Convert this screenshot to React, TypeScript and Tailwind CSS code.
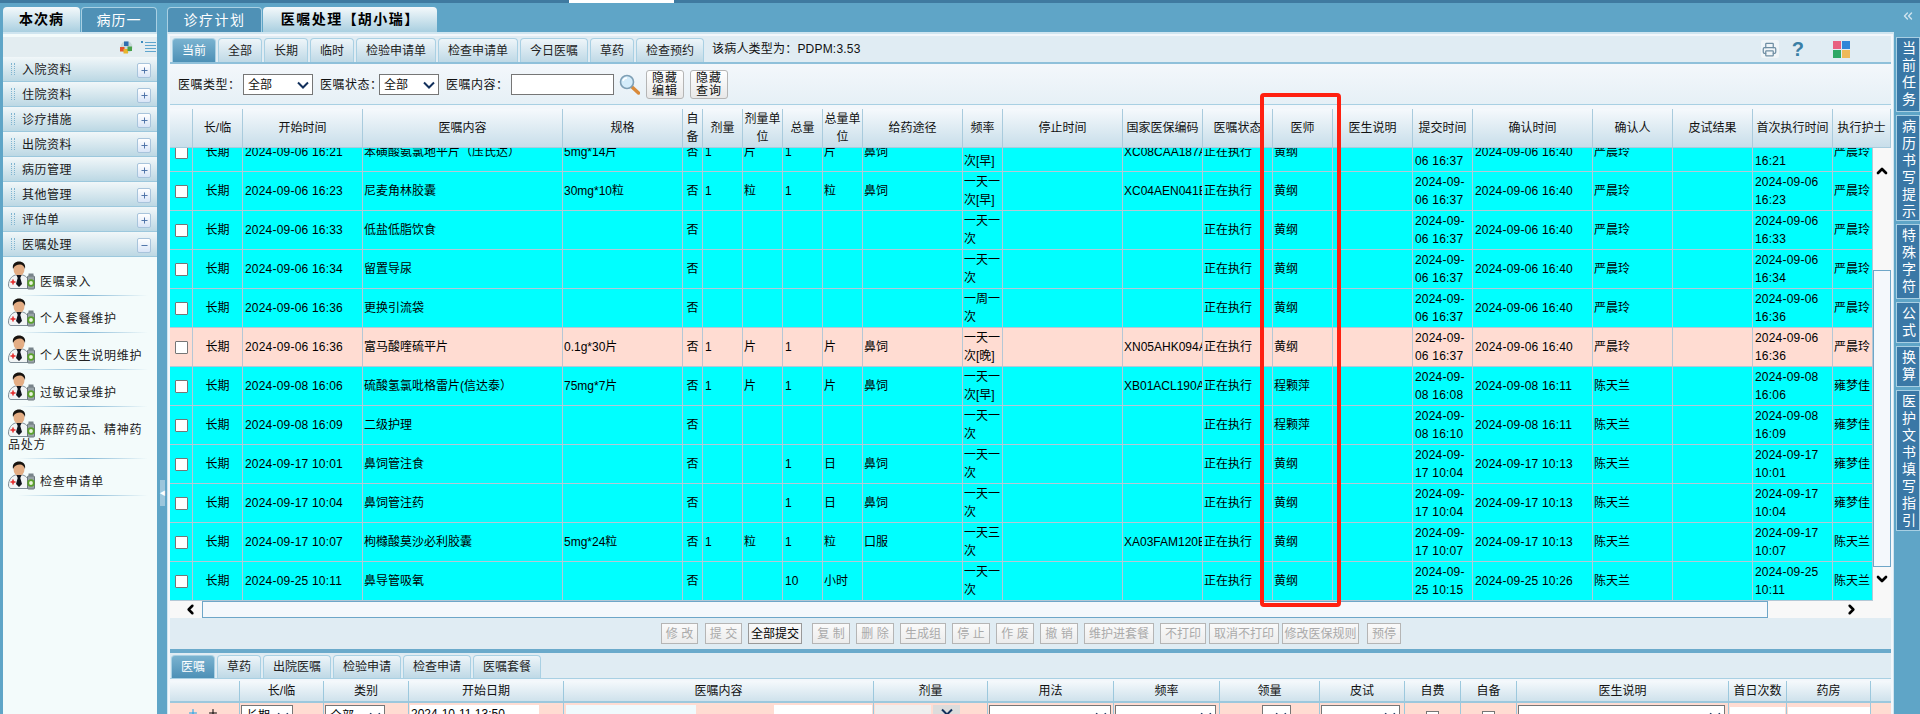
import { ChevronDown, ChevronLeft, ChevronRight, ChevronUp, ChevronsLeft, Minus, Plus, Printer } from "lucide-react";

const FONT = "font-['Liberation_Sans','Noto_Sans_CJK_SC',sans-serif]";
const GRID = "grid grid-cols-[23px_50px_120px_200px_120px_20px_40px_40px_40px_40px_100px_40px_120px_80px_70px_60px_80px_60px_120px_80px_80px_80px_40px]";
const HEAD_GRID = "grid grid-cols-[23px_50px_120px_200px_120px_20px_40px_40px_40px_40px_100px_40px_120px_80px_70px_60px_80px_60px_120px_80px_80px_80px_58px]";
const BOTTOM_GRID = "grid grid-cols-[70px_84px_85px_155px_310px_114px_126px_106px_100px_85px_56px_56px_212px_58px_84px]";

const DoctorIcon = () => (
	<svg width="27" height="29" viewBox="0 0 27 29" className="mr-[5px] inline align-bottom">
		<path d="M0.500 24c0-5 3-9 7-10h7c4 1 6.500 4 6.500 9v4.500H3c-1.500 0-2.500-1.500-2.500-3.500z" fill="#f1f4f5" stroke="#7f8e98" />
		<ellipse cx="11" cy="8" rx="5.500" ry="7" fill="#e3ad84" />
		<path d="M5 8C4 2.500 7.500 0.500 11 0.500s7 2 6 7.500c-1-3-2.500-4.500-5-4.500C9 3.500 6.500 4.500 5 8z" fill="#17130f" />
		<path d="M8.500 14h5l-1.200 3 1.700 6-3 3-3-3 1.700-6z" fill="#10141c" />
		<path d="M2.500 21h5M5 18.500v5" stroke="#e32626" strokeWidth="1.500" />
		<rect x="19.500" y="15" width="7" height="13" rx="1" fill="#98a3a8" stroke="#6a767b" />
		<circle cx="23" cy="22" r="2.800" fill="#eaf3dc" stroke="#5aa02c" strokeWidth="1.800" />
		<rect x="20.500" y="12.500" width="5" height="2.500" fill="#78848a" />
	</svg>
);

const SelectArrow = () => (
	<svg width="12" height="8" viewBox="0 0 12 8" className="shrink-0">
		<path d="M1 1.500 6 6.500l5-5" fill="none" stroke="#12305c" strokeWidth="2" />
	</svg>
);

const SelectBox = ({ label, className }: { label: string; className: string }) => (
	<div className={`flex items-center justify-between border-[1px] border-[#767676] bg-white pl-[4px] pr-[3px] ${className}`}>
		<span>{label}</span>
		<SelectArrow />
	</div>
);

const Magnifier = () => (
	<svg width="21" height="21" viewBox="0 0 21 21">
		<path d="m13 13 6.500 6" stroke="#d98a3a" strokeWidth="3.500" strokeLinecap="round" />
		<circle cx="8" cy="8" r="6.500" fill="#d4ecfa" stroke="#7e9fb5" strokeWidth="1.600" />
		<path d="M4 7c.5-2 2-3 4-3" stroke="#fff" strokeWidth="1.500" fill="none" />
	</svg>
);

const ColorCubes = () => (
	<svg width="15" height="15" viewBox="0 0 15 15">
		<circle cx="8.500" cy="7" r="6" fill="#c6d8d8" />
		<rect x="6" y="1.500" width="4.500" height="4.500" fill="#2f6fb0" />
		<rect x="2" y="7" width="4.500" height="4.500" fill="#e5522a" />
		<rect x="5.500" y="9" width="4.500" height="4.500" fill="#e8b52c" />
		<rect x="9.500" y="6.500" width="4.500" height="4.500" fill="#48a24a" />
	</svg>
);

const ListIcon = () => (
	<svg width="15" height="13" viewBox="0 0 15 13">
		<rect x="0" y="0" width="2" height="2" fill="#3b8cc0" />
		<path d="M4 1.500h11M4 4.500h11M4 7.500h11M4 10.500h11" stroke="#5fa5cd" strokeWidth="1.200" />
	</svg>
);

const leftTop = ["入院资料", "住院资料", "诊疗措施", "出院资料", "病历管理", "其他管理", "评估单", "医嘱处理"];
const leftItems = ["医嘱录入", "个人套餐维护", "个人医生说明维护", "过敏记录维护", "麻醉药品、精神药品处方", "检查申请单"];

const subTabs = [
	{ t: "当前", w: "w-[44px]" },
	{ t: "全部", w: "w-[44px]" },
	{ t: "长期", w: "w-[44px]" },
	{ t: "临时", w: "w-[44px]" },
	{ t: "检验申请单", w: "w-[80px]" },
	{ t: "检查申请单", w: "w-[80px]" },
	{ t: "今日医嘱", w: "w-[68px]" },
	{ t: "草药", w: "w-[44px]" },
	{ t: "检查预约", w: "w-[68px]" },
];

const bottomTabs = [
	{ t: "医嘱", w: "w-[44px]" },
	{ t: "草药", w: "w-[44px]" },
	{ t: "出院医嘱", w: "w-[68px]" },
	{ t: "检验申请", w: "w-[68px]" },
	{ t: "检查申请", w: "w-[68px]" },
	{ t: "医嘱套餐", w: "w-[68px]" },
];

const headers = ["", "长/临", "开始时间", "医嘱内容", "规格", "自备", "剂量", "剂量单位", "总量", "总量单位", "给药途径", "频率", "停止时间", "国家医保编码", "医嘱状态", "医师", "医生说明", "提交时间", "确认时间", "确认人", "皮试结果", "首次执行时间", "执行护士"];

const bottomHeaders = ["", "长/临", "类别", "开始日期", "医嘱内容", "剂量", "用法", "频率", "领量", "皮试", "自费", "自备", "医生说明", "首日次数", "药房"];

// start, content, spec, dose, unit, total, totalUnit, route, freq, code, doctor, submit, confirm, confirmer, first, nurse
const rows = [
	["2024-09-06 16:21", "苯磺酸氨氯地平片（压氏达）", "5mg*14片", "1", "片", "1", "片", "鼻饲", "一天一次[早]", "XC08CAA187A", "黄纲", "2024-09-06 16:37", "2024-09-06 16:40", "严晨玲", "2024-09-06 16:21", "严晨玲"],
	["2024-09-06 16:23", "尼麦角林胶囊", "30mg*10粒", "1", "粒", "1", "粒", "鼻饲", "一天一次[早]", "XC04AEN041E", "黄纲", "2024-09-06 16:37", "2024-09-06 16:40", "严晨玲", "2024-09-06 16:23", "严晨玲"],
	["2024-09-06 16:33", "低盐低脂饮食", "", "", "", "", "", "", "一天一次", "", "黄纲", "2024-09-06 16:37", "2024-09-06 16:40", "严晨玲", "2024-09-06 16:33", "严晨玲"],
	["2024-09-06 16:34", "留置导尿", "", "", "", "", "", "", "一天一次", "", "黄纲", "2024-09-06 16:37", "2024-09-06 16:40", "严晨玲", "2024-09-06 16:34", "严晨玲"],
	["2024-09-06 16:36", "更换引流袋", "", "", "", "", "", "", "一周一次", "", "黄纲", "2024-09-06 16:37", "2024-09-06 16:40", "严晨玲", "2024-09-06 16:36", "严晨玲"],
	["2024-09-06 16:36", "富马酸喹硫平片", "0.1g*30片", "1", "片", "1", "片", "鼻饲", "一天一次[晚]", "XN05AHK094A", "黄纲", "2024-09-06 16:37", "2024-09-06 16:40", "严晨玲", "2024-09-06 16:36", "严晨玲"],
	["2024-09-08 16:06", "硫酸氢氯吡格雷片(信达泰）", "75mg*7片", "1", "片", "1", "片", "鼻饲", "一天一次[早]", "XB01ACL190A", "程颗萍", "2024-09-08 16:08", "2024-09-08 16:11", "陈天兰", "2024-09-08 16:06", "雍梦佳"],
	["2024-09-08 16:09", "二级护理", "", "", "", "", "", "", "一天一次", "", "程颗萍", "2024-09-08 16:10", "2024-09-08 16:11", "陈天兰", "2024-09-08 16:09", "雍梦佳"],
	["2024-09-17 10:01", "鼻饲管注食", "", "", "", "1", "日", "鼻饲", "一天一次", "", "黄纲", "2024-09-17 10:04", "2024-09-17 10:13", "陈天兰", "2024-09-17 10:01", "雍梦佳"],
	["2024-09-17 10:04", "鼻饲管注药", "", "", "", "1", "日", "鼻饲", "一天一次", "", "黄纲", "2024-09-17 10:04", "2024-09-17 10:13", "陈天兰", "2024-09-17 10:04", "雍梦佳"],
	["2024-09-17 10:07", "枸橼酸莫沙必利胶囊", "5mg*24粒", "1", "粒", "1", "粒", "口服", "一天三次", "XA03FAM120E", "黄纲", "2024-09-17 10:07", "2024-09-17 10:13", "陈天兰", "2024-09-17 10:07", "陈天兰"],
	["2024-09-25 10:11", "鼻导管吸氧", "", "", "", "10", "小时", "", "一天一次", "", "黄纲", "2024-09-25 10:15", "2024-09-25 10:26", "陈天兰", "2024-09-25 10:11", "陈天兰"],
];

const actionButtons = [
	{ t: "修 改", c: "w-[37px]" },
	{ t: "提 交", c: "w-[37px] ml-[7px]" },
	{ t: "全部提交", c: "w-[54px] ml-[6px]", on: true },
	{ t: "复 制", c: "w-[38px] ml-[10px]" },
	{ t: "删 除", c: "w-[38px] ml-[6px]" },
	{ t: "生成组", c: "w-[46px] ml-[6px]" },
	{ t: "停 止", c: "w-[38px] ml-[6px]" },
	{ t: "作 废", c: "w-[38px] ml-[6px]" },
	{ t: "撤 销", c: "w-[38px] ml-[6px]" },
	{ t: "维护进套餐", c: "w-[70px] ml-[6px]" },
	{ t: "不打印", c: "w-[46px] ml-[6px]" },
	{ t: "取消不打印", c: "w-[70px] ml-[3px]" },
	{ t: "修改医保规则", c: "w-[77px] ml-[3px]" },
	{ t: "预停", c: "w-[34px] ml-[8px]" },
];

const railItems = [
	{ t: "当前任务", h: "h-[75px]" },
	{ t: "病历书写提示", h: "h-[106px]" },
	{ t: "特殊字符", h: "h-[75px]" },
	{ t: "公式", h: "h-[41px]" },
	{ t: "换算", h: "h-[41px]" },
	{ t: "医护文书填写指引", h: "h-[141px]" },
];

const Tab = ({ t, w, active }: { t: string; w: string; active?: boolean }) => (
	<div
		className={`flex items-center justify-center rounded-t-[4px] border-[1px] border-b-0 border-[#a9d0e3] ${w} ${
			active ? "bg-gradient-to-b from-[#7ab3d0] to-[#4d90b6] text-white" : "bg-gradient-to-b from-[#eef5f9] to-[#bfd9e6] text-[#222]"
		}`}
	>
		{t}
	</div>
);

const Cell = ({ children, className = "" }: { children?: React.ReactNode; className?: string }) => (
	<div className={`flex items-center overflow-hidden border-r-[1px] border-[#b4c8d6] ${className}`}>{children}</div>
);

const DataRow = ({ row, pink }: { row: string[]; pink?: boolean }) => {
	const [start, content, spec, dose, unit, total, totalUnit, route, freq, code, doctor, submit, confirm, confirmer, first, nurse] = row;
	return (
		<div className={`${GRID} h-[39px] border-b-[1px] border-[#b4c8d6] leading-[18px] ${pink ? "bg-[#ffdcd2]" : "bg-[#00ffff]"}`}>
			<Cell className="justify-center">
				<div className="h-[13px] w-[13px] rounded-[1px] border-[1px] border-[#767676] bg-white" />
			</Cell>
			<Cell className="justify-center">长期</Cell>
			<Cell className="pl-[2px] tracking-[0.2px]">{start}</Cell>
			<Cell className="pl-[1px]">{content}</Cell>
			<Cell className="pl-[1px]">{spec}</Cell>
			<Cell className="justify-center">否</Cell>
			<Cell className="pl-[2px]">{dose}</Cell>
			<Cell className="pl-[1px]">{unit}</Cell>
			<Cell className="pl-[2px]">{total}</Cell>
			<Cell className="pl-[1px]">{totalUnit}</Cell>
			<Cell className="pl-[1px]">{route}</Cell>
			<Cell className="pl-[1px]">{freq}</Cell>
			<Cell />
			<Cell className="whitespace-nowrap pl-[1px]">{code}</Cell>
			<Cell className="pl-[1px]">正在执行</Cell>
			<Cell className="pl-[1px]">{doctor}</Cell>
			<Cell />
			<Cell className="pl-[2px] tracking-[0.2px]">{submit}</Cell>
			<Cell className="pl-[2px] tracking-[0.2px]">{confirm}</Cell>
			<Cell className="pl-[1px]">{confirmer}</Cell>
			<Cell />
			<Cell className="pl-[2px] tracking-[0.2px]">{first}</Cell>
			<Cell className="pl-[1px]">{nurse}</Cell>
		</div>
	);
};

const LeftPanel = () => (
	<div className="ml-[3px] w-[154px] pt-[4px]">
		<div className="flex h-[25px] text-[14px] tracking-[1px]">
			<div className="flex w-[77px] items-center justify-center rounded-t-[4px] bg-gradient-to-b from-[#f4f9fb] to-[#a9cfe0] font-bold text-black">本次病</div>
			<div className="ml-[1px] flex w-[76px] items-center justify-center rounded-t-[4px] border-[1px] border-b-0 border-[#a9d0e3] bg-[#4f91b6] text-white">病历一</div>
		</div>
		<div className="h-[682px] border-t-[2px] border-[#cfe5f0] bg-[#f3fbfb]">
			<div className="h-[3px]" />
			<div className="flex h-[20px] items-center justify-end gap-[8px] bg-[#e3edf1] pr-[1px]">
				<ColorCubes />
				<ListIcon />
			</div>
			{leftTop.map((t, i) => (
				<div key={t} className="flex h-[25px] items-center border-b-[1px] border-[#9cc8dd] bg-gradient-to-b from-[#f1f7f9] to-[#bcd8e4] pr-[6px] pl-[8px] tracking-[0.5px] text-[#1a1a1a]">
					<div className="h-[12px] w-[4px] border-x-[1px] border-dotted border-[#7fb4d0]" />
					<span className="ml-[7px] flex-1 pt-[2px]">{t}</span>
					<div className="mt-[2px] flex h-[15px] w-[14px] items-center justify-center rounded-[2px] border-[1px] border-[#a8c4dc] bg-gradient-to-b from-white to-[#d9e5f7] text-[#4a6fa5]">
						{i === 7 ? <Minus size={9} strokeWidth={2.5} /> : <Plus size={9} strokeWidth={2.5} />}
					</div>
				</div>
			))}
			<div className="h-[2px]" />
			{leftItems.map((t) => (
				<div key={t} className="pt-[2px] pr-[8px] pl-[5px] leading-[15px] tracking-[0.8px] text-[#222]">
					<DoctorIcon />
					{t}
					<div className="mt-[5px] ml-[10px] h-[1px] w-[130px] bg-gradient-to-r from-transparent via-[#7fb4d4] to-transparent" />
				</div>
			))}
		</div>
	</div>
);

const MainPanel = () => (
	<div className="ml-[10px] mt-[1px] flex w-[1727px] flex-col">
		<div className="flex h-[28px] gap-[1px] pt-[3px] text-[14px] tracking-[1.5px]">
			<div className="flex w-[95px] items-center justify-center rounded-t-[4px] border-[1px] border-b-0 border-[#a9d0e3] bg-[#4f91b6] text-white">诊疗计划</div>
			<div className="flex w-[174px] items-center justify-center rounded-t-[4px] bg-gradient-to-b from-[#f4f9fb] to-[#a9cfe0] font-bold text-black">
				<span>
					医嘱处理<span className="inline-block w-[15px] text-center">【</span>胡小瑞<span className="inline-block w-[15px] text-center">】</span>
				</span>
			</div>
		</div>
		<div className="h-[682px] border-x-[1px] border-t-[2px] border-[#cfe5f0] bg-[#f3f7fb] px-[2px] pt-[2px]">
			<div className="flex h-[28px] items-end gap-[2px] border-b-[2px] border-[#8fc0da] bg-[#e0ecf3] pl-[2px]">
				{subTabs.map((s, i) => (
					<Tab key={s.t} t={s.t} w={`${s.w} h-[24px]`} active={i === 0} />
				))}
				<div className="flex h-[26px] flex-1 items-center pl-[6px] text-[#111]">
					<span className="tracking-[0.2px]">该病人类型为：PDPM:3.53</span>
					<div className="ml-auto flex items-center">
						<div className="flex h-[18px] w-[18px] items-center justify-center rounded-[2px] bg-[#f0f5f8] text-[#6f8ea3]">
							<Printer size={15} />
						</div>
						<span className="ml-[13px] text-[20px] font-bold leading-none text-[#3a7fa5]">?</span>
						<div className="ml-[29px] mr-[41px] grid grid-cols-2 gap-[1px]">
							<div className="h-[8px] w-[8px] bg-[#e8607f]" />
							<div className="h-[8px] w-[8px] bg-[#2e86d8]" />
							<div className="h-[8px] w-[8px] bg-[#2fa866]" />
							<div className="h-[8px] w-[8px] bg-[#eeb958]" />
						</div>
					</div>
				</div>
			</div>
			<div className="mt-[1px] flex h-[40px] items-center border-b-[1px] border-[#a9d0e3] bg-gradient-to-b from-[#f3f7fb] to-[#e6f0f6] pl-[8px] text-[#111]">
				<span className="w-[65px] tracking-[0.5px]">医嘱类型：</span>
				<SelectBox label="全部" className="h-[21px] w-[70px]" />
				<span className="ml-[7px] w-[59px] tracking-[0.5px] whitespace-nowrap">医嘱状态：</span>
				<SelectBox label="全部" className="h-[21px] w-[60px]" />
				<span className="ml-[7px] w-[65px] tracking-[0.5px] whitespace-nowrap">医嘱内容：</span>
				<div className="h-[21px] w-[103px] border-[1px] border-[#767676] bg-white" />
				<div className="ml-[5px] mr-[6px] flex">
					<Magnifier />
				</div>
				<div className="h-[29px] w-[38px] rounded-[3px] border-[1px] border-[#b5b5b5] bg-gradient-to-b from-white to-[#e8e8e8] pt-[1px] text-center leading-[13px] tracking-[1px]">隐藏<br />编辑</div>
				<div className="ml-[6px] h-[29px] w-[38px] rounded-[3px] border-[1px] border-[#b5b5b5] bg-gradient-to-b from-white to-[#e8e8e8] pt-[1px] text-center leading-[13px] tracking-[1px]">隐藏<br />查询</div>
			</div>
			<div className="h-[4px] bg-[#f3f7fb]" />
			<div className={`${HEAD_GRID} h-[39px] border-b-[1px] border-[#a9cbdd] bg-gradient-to-b from-[#f5f9fc] to-[#c8deea] leading-[18px] text-[#111]`}>
				{headers.map((h, i) => (
					<div key={i} className="flex items-center justify-center border-r-[1px] border-[#a9cbdd] text-center">{h}</div>
				))}
			</div>
			<div className="flex h-[453px]">
				<div className="h-full w-[1703px] overflow-hidden text-black">
					<div className="-mt-[15px]">
						{rows.map((r, i) => (
							<DataRow key={i} row={r} pink={i === 5} />
						))}
					</div>
				</div>
				<div className="flex h-full w-[18px] flex-col items-center bg-[#f8f8f8]">
					<ChevronUp size={16} strokeWidth={4} className="mt-[15px]" />
					<div className="mt-[91px] h-[297px] w-[18px] border-[1px] border-[#6ea6c8] bg-[#f4f8fc]" />
					<ChevronDown size={16} strokeWidth={4} className="mt-[4px]" />
				</div>
			</div>
			<div className="flex h-[17px] items-center bg-[#f8f8f8]">
				<div className="flex w-[32px] justify-center pl-[8px]">
					<ChevronLeft size={15} strokeWidth={4} />
				</div>
				<div className="h-[17px] w-[1566px] border-[1px] border-[#6ea6c8] bg-[#f4f8fc]" />
				<div className="flex flex-1 justify-center pl-[44px]">
					<ChevronRight size={15} strokeWidth={4} />
				</div>
			</div>
			<div className="flex h-[31px] items-center bg-[#e0ecf3] pl-[491px]">
				{actionButtons.map((b) => (
					<div
						key={b.t}
						className={`flex h-[21px] items-center justify-center whitespace-pre border-[1px] bg-gradient-to-b from-[#fafafa] to-[#ececec] ${b.c} ${
							b.on ? "border-[#999] text-black" : "border-[#b5b5b5] text-[#aaa]"
						}`}
					>
						{b.t}
					</div>
				))}
			</div>
			<div className="h-[4px] bg-[#6baacb]" />
			<div className="flex h-[26px] items-end gap-[2px] border-b-[1px] border-[#a9d0e3] bg-[#e0ecf3] pl-[1px]">
				{bottomTabs.map((s, i) => (
					<Tab key={s.t} t={s.t} w={`${s.w} h-[23px]`} active={i === 0} />
				))}
			</div>
			<div className="h-[2px]" />
			<div className={`${BOTTOM_GRID} h-[22px] border-b-[2px] border-[#9cc8dd] bg-gradient-to-b from-[#f5f9fc] to-[#cfe2ec] text-[#111]`}>
				{bottomHeaders.map((h, i) => (
					<div key={i} className="flex items-center justify-center border-r-[1px] border-[#9cc8dd]">{h}</div>
				))}
			</div>
			<div className={`${BOTTOM_GRID} h-[14px] overflow-hidden bg-[#ffdcd2]`}>
				<div className="flex items-start justify-end gap-[8px] border-r-[1px] border-[#9cc8dd] pt-[4px] pr-[20px]">
					<Plus size={12} strokeWidth={2} className="text-[#18a0e8]" />
					<Plus size={12} strokeWidth={2} className="text-black" />
				</div>
				<div className="border-r-[1px] border-[#9cc8dd] pt-[2px] pl-[1px]">
					<SelectBox label="长期" className="h-[21px] w-[52px]" />
				</div>
				<div className="border-r-[1px] border-[#9cc8dd] pt-[2px] pl-[1px]">
					<SelectBox label="全部" className="h-[21px] w-[60px]" />
				</div>
				<div className="border-r-[1px] border-[#9cc8dd] pt-[2px] pl-[1px]">
					<div className="h-[21px] w-[129px] bg-white pl-[1px]">2024-10-11 13:50</div>
				</div>
				<div className="flex gap-[78px] border-r-[1px] border-[#9cc8dd] pt-[2px] pl-[2px]">
					<div className="h-[21px] w-[130px] bg-[#f0fafd]" />
					<div className="h-[21px] w-[98px] bg-white" />
				</div>
				<div className="flex border-r-[1px] border-[#9cc8dd] pt-[2px] pl-[1px]">
					<div className="h-[21px] w-[56px] bg-[#efefef]" />
					<div className="ml-[2px] flex h-[21px] w-[27px] justify-center bg-[#dcdcdc] pt-[3px]"><SelectArrow /></div>
				</div>
				<div className="border-r-[1px] border-[#9cc8dd] pt-[2px] pl-[1px]">
					<SelectBox label="" className="h-[21px] w-[122px]" />
				</div>
				<div className="border-r-[1px] border-[#9cc8dd] pt-[2px] pl-[1px]">
					<SelectBox label="" className="h-[21px] w-[101px]" />
				</div>
				<div className="flex justify-end border-r-[1px] border-[#9cc8dd] pt-[2px] pr-[28px]">
					<SelectBox label="" className="h-[21px] w-[29px]" />
				</div>
				<div className="border-r-[1px] border-[#9cc8dd] pt-[2px] pl-[1px]">
					<SelectBox label="" className="h-[21px] w-[79px]" />
				</div>
				<div className="flex justify-center border-r-[1px] border-[#9cc8dd] pt-[8px]">
					<div className="h-[13px] w-[13px] border-[1px] border-[#767676] bg-white" />
				</div>
				<div className="flex justify-center border-r-[1px] border-[#9cc8dd] pt-[8px]">
					<div className="h-[13px] w-[13px] border-[1px] border-[#767676] bg-white" />
				</div>
				<div className="border-r-[1px] border-[#9cc8dd] pt-[2px] pl-[1px]">
					<SelectBox label="" className="h-[21px] w-[207px]" />
				</div>
				<div className="border-r-[1px] border-[#9cc8dd] pt-[4px] pl-[1px]">
					<div className="h-[21px] w-[55px] bg-white" />
				</div>
				<div className="border-r-[1px] border-[#9cc8dd] pt-[4px] pl-[1px]">
					<div className="h-[21px] w-[82px] bg-white" />
				</div>
			</div>
		</div>
	</div>
);

const RightRail = () => (
	<div className="ml-[2px] flex w-[25px] flex-col gap-[3px]">
		<div className="flex h-[31px] items-start justify-center pt-[6px] text-[#cfe3ee]">
			<ChevronsLeft size={14} strokeWidth={2.5} />
		</div>
		{railItems.map((r) => (
			<div key={r.t} className={`flex justify-center overflow-hidden border-[1px] border-[#a8cfe3] bg-[#3a78a6] pt-[3px] text-[14px] leading-[14px] tracking-[3px] whitespace-nowrap text-white ${r.h}`}>
				<span className="[writing-mode:vertical-lr]">{r.t}</span>
			</div>
		))}
	</div>
);

export default function App() {
	return (
		<div className={`relative h-[714px] w-[1920px] overflow-hidden bg-[#5fa5c7] text-[12px] ${FONT}`}>
			<div className="h-[3px] bg-[#3f7aa0]">
				<div className="ml-[569px] h-[3px] w-[105px] bg-white" />
			</div>
			<div className="flex h-[711px]">
				<LeftPanel />
				<div className="flex w-[0px] flex-col">
					<div className="ml-[3px] mt-[477px] flex h-[26px] w-[5px] shrink-0 items-center justify-center bg-[#9cc6dc] text-[6px] text-white">◀</div>
				</div>
				<MainPanel />
				<RightRail />
			</div>
			<div className="absolute top-[93px] left-[1260px] h-[514px] w-[81px] rounded-[4px] border-[4px] border-[#ff2010]" />
		</div>
	);
}
